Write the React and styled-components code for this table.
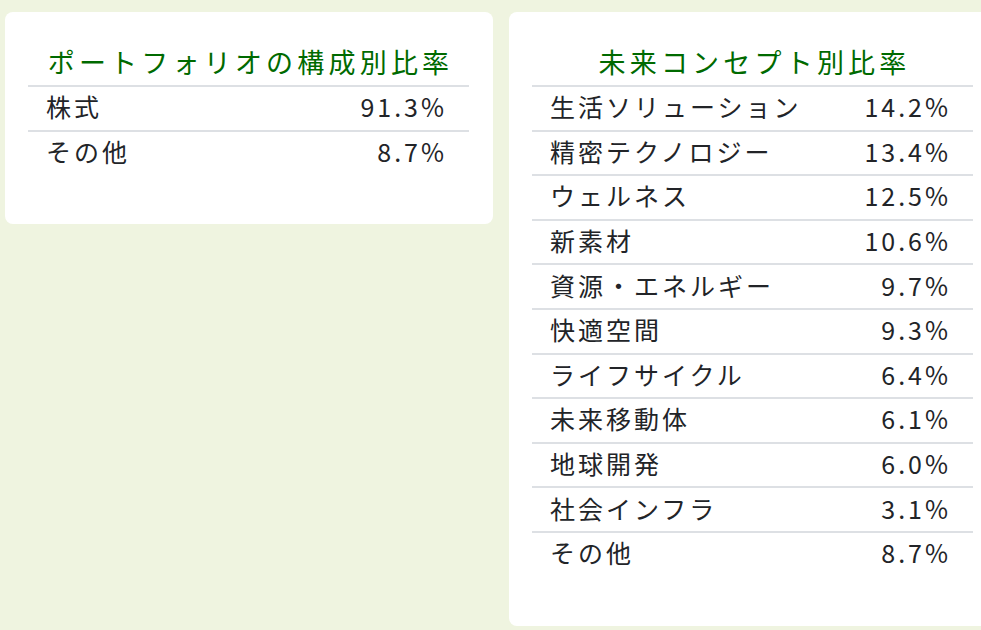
import React from "react";
import styled, { createGlobalStyle } from "styled-components";

const GlobalStyle = createGlobalStyle`
  html, body {
    margin: 0;
    padding: 0;
    background: #eff4e0;
    overflow: hidden;
  }
  body {
    font-family: "Noto Sans CJK JP", "Noto Sans", sans-serif;
  }
`;

const Page = styled.div`
  display: grid;
  grid-template-columns: 488px 488px;
  column-gap: 16px;
  align-items: start;
  padding: 12px 0 0 5px;
  width: 1100px;
`;

const Card = styled.div`
  background: #ffffff;
  border-radius: 8px;
  padding: 24px 24px 50px 23px;
`;

const Table = styled.div`
  display: flex;
  flex-direction: column;
`;

const Title = styled.div`
  text-align: center;
  color: #006a00;
  font-size: 27px;
  line-height: 44px;
  padding: 4px 0 1px 4px;
  letter-spacing: 4.2px;
  border-bottom: 2px solid #dde0e4;
`;

const Row = styled.div`
  box-sizing: border-box;
  display: flex;
  justify-content: space-between;
  align-items: center;
  padding: 0 22px 4px 18px;
  height: 42.6px;
  font-size: 25px;
  letter-spacing: 3px;
  color: #222428;

  & + & {
    height: 44.6px;
    border-top: 2px solid #dde0e4;
  }
`;

const Label = styled.span``;

const Value = styled.span`
  text-align: right;
`;

const portfolio = [
  { name: "株式", rate: "91.3%" },
  { name: "その他", rate: "8.7%" },
];

const concepts = [
  { name: "生活ソリューション", rate: "14.2%" },
  { name: "精密テクノロジー", rate: "13.4%" },
  { name: "ウェルネス", rate: "12.5%" },
  { name: "新素材", rate: "10.6%" },
  { name: "資源・エネルギー", rate: "9.7%" },
  { name: "快適空間", rate: "9.3%" },
  { name: "ライフサイクル", rate: "6.4%" },
  { name: "未来移動体", rate: "6.1%" },
  { name: "地球開発", rate: "6.0%" },
  { name: "社会インフラ", rate: "3.1%" },
  { name: "その他", rate: "8.7%" },
];

const RateTable = ({ title = "", rows = [] }) => {
  return (
    <Card>
      <Table>
        <Title>{title}</Title>
        {rows.map((row, ix) => (
          <Row key={`${title}-${ix}`}>
            <Label>{row.name}</Label>
            <Value>{row.rate}</Value>
          </Row>
        ))}
      </Table>
    </Card>
  );
};

const App = () => {
  return (
    <>
      <GlobalStyle />
      <Page>
        <RateTable title="ポートフォリオの構成別比率" rows={portfolio} />
        <RateTable title="未来コンセプト別比率" rows={concepts} />
      </Page>
    </>
  );
};

export default App;
